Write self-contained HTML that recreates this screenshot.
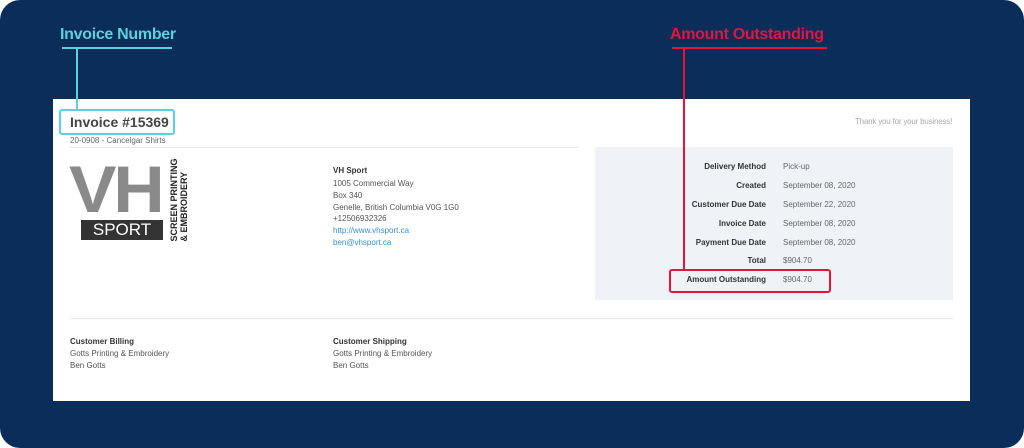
<!DOCTYPE html>
<html><head><style>
body{margin:0;width:1024px;height:448px;background:#fff;font-family:"Liberation Sans",sans-serif;position:relative;overflow:hidden}
.bg{position:absolute;left:0;top:0;width:1024px;height:448px;background:#0b2d5a;border-radius:20px}
.card{position:absolute;left:53px;top:99px;width:917px;height:302px;background:#fff}
.a{position:absolute;white-space:nowrap}
.s{font-size:8px;color:#555}
.l{font-size:8px;font-weight:bold;color:#333;text-align:right;width:180px}
.v{font-size:8px;color:#666}
</style></head><body>
<div class="bg"></div>
<div class="card"></div>
<div class="a" style="left:60px;top:26px;font-size:16px;font-weight:bold;color:#5ecfdc;letter-spacing:-0.3px">Invoice Number</div>
<div class="a" style="left:62px;top:47px;width:110px;height:2px;background:#5ecfdc"></div>
<div class="a" style="left:76px;top:48px;width:2px;height:62px;background:#5ecfdc"></div>
<div class="a" style="left:59px;top:109px;width:112px;height:22px;border:2px solid #5ecfdc;border-radius:3px"></div>
<div class="a" style="left:70px;top:114px;font-size:14px;font-weight:bold;color:#444">Invoice #15369</div>
<div class="a" style="left:70px;top:136px;font-size:8px;color:#666">20-0908 - Cancelgar Shirts</div>
<div class="a" style="left:70px;top:147px;width:508px;height:1px;background:#e4e7ec"></div>
<div class="a" style="left:855px;top:117px;font-size:8px;color:#aaa;letter-spacing:-0.2px">Thank you for your business!</div>

<div class="a" style="left:69px;top:156px;font-size:66px;font-weight:bold;color:#8a8a8a;letter-spacing:-3px;line-height:66px;transform:scaleX(1.08);transform-origin:left top">VH</div>
<div class="a" style="left:81px;top:220px;width:82px;height:20px;background:#333;color:#fff;font-size:17px;text-align:center;line-height:20px">SPORT</div>
<div class="a" style="left:179px;top:200px;transform:translate(-50%,-50%) rotate(-90deg);font-size:9px;font-weight:bold;color:#222;line-height:10px;text-align:left">SCREEN PRINTING<br>&amp; EMBROIDERY</div>

<div class="a" style="left:333px;top:166px;font-size:8px;font-weight:bold;color:#333">VH Sport</div>
<div class="a s" style="left:333px;top:178px;line-height:11.8px">1005 Commercial Way<br>Box 340<br>Genelle, British Columbia V0G 1G0<br>+12506932326<br><span style="color:#3a8fd6">http://www.vhsport.ca</span><br><span style="color:#3a8fd6">ben@vhsport.ca</span></div>

<div class="a" style="left:595px;top:147px;width:358px;height:153px;background:#eff2f7;border-radius:2px"></div>
<div class="a l" style="left:586px;top:162px">Delivery Method</div><div class="a v" style="left:783px;top:162px">Pick-up</div>
<div class="a l" style="left:586px;top:181px">Created</div><div class="a v" style="left:783px;top:181px">September 08, 2020</div>
<div class="a l" style="left:586px;top:200px">Customer Due Date</div><div class="a v" style="left:783px;top:200px">September 22, 2020</div>
<div class="a l" style="left:586px;top:219px">Invoice Date</div><div class="a v" style="left:783px;top:219px">September 08, 2020</div>
<div class="a l" style="left:586px;top:238px">Payment Due Date</div><div class="a v" style="left:783px;top:238px">September 08, 2020</div>
<div class="a l" style="left:586px;top:256px">Total</div><div class="a v" style="left:783px;top:256px">$904.70</div>
<div class="a l" style="left:586px;top:275px">Amount Outstanding</div><div class="a v" style="left:783px;top:275px">$904.70</div>

<div class="a" style="left:670px;top:26px;font-size:16px;font-weight:bold;color:#e5143c;letter-spacing:-0.3px">Amount Outstanding</div>
<div class="a" style="left:672px;top:47px;width:155px;height:2px;background:#e5143c"></div>
<div class="a" style="left:683px;top:48px;width:2px;height:222px;background:#e5143c"></div>
<div class="a" style="left:669px;top:269px;width:158px;height:20px;border:2px solid #e5143c;border-radius:3px"></div>

<div class="a" style="left:70px;top:318px;width:883px;height:1px;background:#e4e7ec"></div>
<div class="a" style="left:70px;top:336px;font-size:8px;line-height:12px;color:#555"><b style="color:#333">Customer Billing</b><br>Gotts Printing &amp; Embroidery<br>Ben Gotts</div>
<div class="a" style="left:333px;top:336px;font-size:8px;line-height:12px;color:#555"><b style="color:#333">Customer Shipping</b><br>Gotts Printing &amp; Embroidery<br>Ben Gotts</div>
</body></html>
